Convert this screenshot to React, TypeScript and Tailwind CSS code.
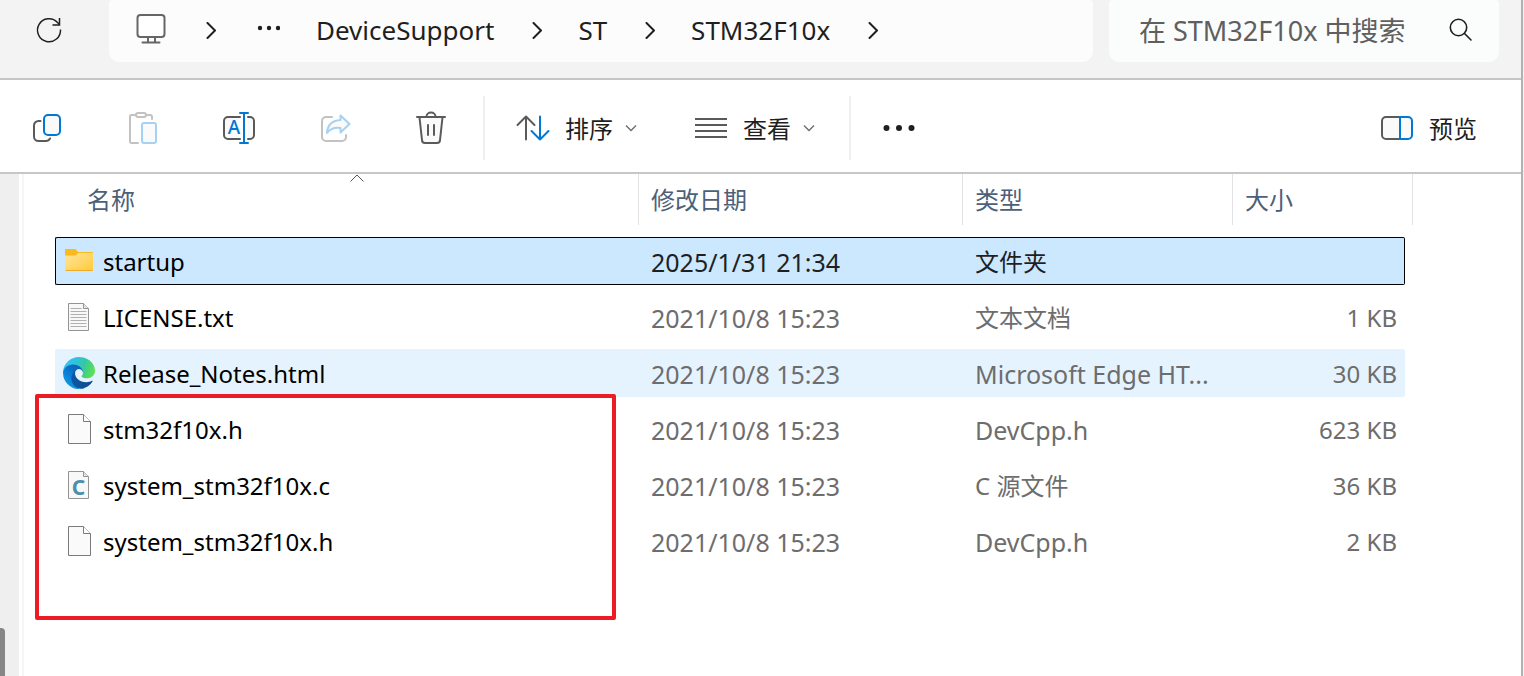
import React from "react";
import clsx from "clsx";

type FileKind = "folder" | "text" | "edge" | "blank" | "csource";

interface FileRow {
  name: string;
  date: string;
  type: string;
  size: string;
  kind: FileKind;
  state?: "selected" | "hover";
}

const files: FileRow[] = [
  { name: "startup", date: "2025/1/31 21:34", type: "文件夹", size: "", kind: "folder", state: "selected" },
  { name: "LICENSE.txt", date: "2021/10/8 15:23", type: "文本文档", size: "1 KB", kind: "text" },
  {
    name: "Release_Notes.html",
    date: "2021/10/8 15:23",
    type: "Microsoft Edge HT...",
    size: "30 KB",
    kind: "edge",
    state: "hover",
  },
  { name: "stm32f10x.h", date: "2021/10/8 15:23", type: "DevCpp.h", size: "623 KB", kind: "blank" },
  { name: "system_stm32f10x.c", date: "2021/10/8 15:23", type: "C 源文件", size: "36 KB", kind: "csource" },
  { name: "system_stm32f10x.h", date: "2021/10/8 15:23", type: "DevCpp.h", size: "2 KB", kind: "blank" },
];

const hasHan = (text: string) => /[\u4e00-\u9fff]/.test(text);

function Icon({ children, className = "size-8" }: { children: React.ReactNode; className?: string }) {
  return (
    <svg
      viewBox="0 0 32 32"
      fill="none"
      stroke="#5a5a5a"
      strokeWidth="2"
      strokeLinecap="round"
      strokeLinejoin="round"
      className={clsx("shrink-0 overflow-visible", className)}
      aria-hidden="true"
    >
      {children}
    </svg>
  );
}

function ChevronRight() {
  return (
    <svg viewBox="0 0 12 18" fill="none" stroke="#1f1f1f" strokeWidth="2" className="h-[18px] w-3 shrink-0" aria-hidden="true">
      <path d="M3.500 1 11 8.500 3.500 16" strokeLinecap="round" strokeLinejoin="round" />
    </svg>
  );
}

function ChevronDown() {
  return (
    <svg viewBox="0 0 12 8" fill="none" stroke="#6b6b6b" strokeWidth="1.3" className="h-2 w-3 shrink-0" aria-hidden="true">
      <path d="M1 1.5 6 6.5 11 1.5" />
    </svg>
  );
}

function EdgeIcon() {
  return (
    <svg viewBox="0 0 256 256" className="size-8 shrink-0" aria-hidden="true">
      <defs>
        <linearGradient id="edge-a" x1="63" y1="178" x2="242" y2="178" gradientUnits="userSpaceOnUse">
          <stop offset="0" stopColor="#0c59a4" />
          <stop offset="1" stopColor="#114a8b" />
        </linearGradient>
        <linearGradient id="edge-b" x1="157" y1="93" x2="46" y2="215" gradientUnits="userSpaceOnUse">
          <stop offset="0" stopColor="#0c62b4" />
          <stop offset=".35" stopColor="#0a6cc4" />
          <stop offset=".67" stopColor="#0680d7" />
          <stop offset="1" stopColor="#1490df" />
        </linearGradient>
        <linearGradient id="edge-c" x1="30" y1="50" x2="250" y2="130" gradientUnits="userSpaceOnUse">
          <stop offset="0" stopColor="#35c1f1" />
          <stop offset=".3" stopColor="#2fc2df" />
          <stop offset=".6" stopColor="#36c7a0" />
          <stop offset="1" stopColor="#5ee250" />
        </linearGradient>
      </defs>
      <g transform="translate(-4.63 -4.92)">
        <path
          fill="url(#edge-a)"
          d="M235.68 195.46a93.73 93.73 0 0 1-10.54 4.71 101.87 101.87 0 0 1-35.9 6.46c-47.32 0-88.54-32.55-88.54-74.32A31.48 31.48 0 0 1 117.13 105c-42.8 1.8-53.8 46.4-53.8 72.53 0 73.88 68.09 81.37 82.76 81.37 7.91 0 19.84-2.3 27-4.56l1.31-.44a128.34 128.34 0 0 0 66.6-52.8 4 4 0 0 0-5.32-5.64Z"
        />
        <path
          fill="url(#edge-b)"
          d="M110.34 246.34A79.2 79.2 0 0 1 87.6 225a80.72 80.72 0 0 1 29.53-120c3.12-1.47 8.45-4.13 15.54-4a32.35 32.35 0 0 1 25.69 13 31.88 31.88 0 0 1 6.36 18.66c0-.21 24.46-79.6-80-79.6-43.9 0-80 41.66-80 78.21a130.15 130.15 0 0 0 12.11 56 128 128 0 0 0 156.38 67.11 75.55 75.55 0 0 1-62.78-8Z"
        />
        <path
          fill="url(#edge-c)"
          d="M156.94 153.78c-.81 1.05-3.3 2.5-3.3 5.66 0 2.61 1.7 5.12 4.72 7.23 14.38 10 41.49 8.68 41.56 8.68a59.56 59.56 0 0 0 30.27-8.35 61.38 61.38 0 0 0 30.43-52.88c.26-22.41-8-37.31-11.34-43.91C228.09 28.76 182.35 4.92 132.61 4.92a128 128 0 0 0-128 126.2c.48-36.54 36.8-66.05 80-66.05 3.5 0 23.46.34 42 10.07 16.34 8.58 24.9 18.94 30.85 29.21 6.18 10.67 7.28 24.15 7.28 29.52s-2.74 13.33-7.8 19.91Z"
        />
      </g>
    </svg>
  );
}

function FileIcon({ kind }: { kind: FileKind }) {
  if (kind === "edge") return <EdgeIcon />;

  if (kind === "folder") {
    return (
      <svg viewBox="0 0 32 32" className="size-8 shrink-0" aria-hidden="true">
        <defs>
          <linearGradient id="folder" x1="0" y1="0" x2="1" y2="1">
            <stop offset="0" stopColor="#ffe69c" />
            <stop offset="1" stopColor="#ffca3a" />
          </linearGradient>
        </defs>
        <path d="M2 5a1 1 0 0 1 1-1h8.500a2 2 0 0 1 1.500.600L15 7h14a1 1 0 0 1 1 1v4H2z" fill="#fbb91c" />
        <path d="M2 10.500h9.500a2 2 0 0 0 1.500-.600L15 8h15v17a1 1 0 0 1-1 1H3a1 1 0 0 1-1-1z" fill="url(#folder)" />
        <path d="M2.500 25.500h27" stroke="#eeac22" />
      </svg>
    );
  }

  if (kind === "blank") {
    return (
      <svg viewBox="0 0 32 32" fill="none" stroke="#7a7a7a" className="size-8 shrink-0" aria-hidden="true">
        <path d="M5.500 1.500h15l7 7v22h-22z" fill="#fafafa" />
        <path d="M20.500 1.500v7h7" fill="#fff" />
      </svg>
    );
  }

  return (
    <svg viewBox="0 0 32 32" fill="none" stroke="#949494" className="size-8 shrink-0" aria-hidden="true">
      <path d="M5.500 2.500h15l5 5v22h-20z" fill="#f8f8f8" />
      <path d="M20.500 2.500v5h5" fill="#e4e4e4" />
      {kind === "text" ? (
        <path d="M7.500 7.500h11M7.500 10.500h16M7.500 13.500h16M7.500 16.500h16M7.500 19.500h16M7.500 22.500h16M7.500 25.500h16" stroke="#b0b0b0" />
      ) : (
        <text x="15.500" y="26" textAnchor="middle" fontSize="21" fontWeight="700" fill="#4a8fae" stroke="none" className="font-['Noto_Sans',sans-serif]">
          C
        </text>
      )}
    </svg>
  );
}

function AddressBar() {
  const crumb = "whitespace-nowrap pb-0.5";

  return (
    <header className="flex h-20 shrink-0 items-start border-b-2 border-[#c6c6c6] bg-[#f3f3f3] pr-[22px]">
      <button type="button" aria-label="刷新" className="flex h-[62px] w-[109px] shrink-0 items-center pl-[33px]">
        <svg viewBox="0 0 32 32" fill="none" stroke="#1f1f1f" strokeWidth="1.500" className="size-8" aria-hidden="true">
          <path d="M27.500 14.500A11.500 11.500 0 1 1 24.500 7.500L26.500 9.500" />
          <path d="M26.500 3v7h-7" />
        </svg>
      </button>

      <nav
        aria-label="地址"
        className="flex h-[62px] min-w-0 flex-1 items-center gap-9 rounded-t-sm rounded-b-[10px] bg-[#fcfcfc] pl-[27px] text-[26px] text-[#1f1f1f]"
      >
        <button type="button" aria-label="此电脑">
          <Icon className="size-8">
            <rect x="1.500" y="0" width="27" height="22" rx="3" fill="#fff" stroke="#666" />
            <path d="M12 23v4M19 23v4M6.500 27.500h17" stroke="#666" />
          </Icon>
        </button>
        <ChevronRight />
        <button type="button" aria-label="更多">
          <svg viewBox="0 0 28 32" fill="#1f1f1f" className="h-8 w-7" aria-hidden="true">
            <circle cx="8" cy="13" r="2.200" />
            <circle cx="17" cy="13" r="2.200" />
            <circle cx="26" cy="13" r="2.200" />
          </svg>
        </button>
        <button type="button" className={crumb}>
          DeviceSupport
        </button>
        <ChevronRight />
        <button type="button" className={crumb}>
          ST
        </button>
        <ChevronRight />
        <button type="button" className={crumb}>
          STM32F10x
        </button>
        <ChevronRight />
      </nav>

      <label className="ml-4 flex h-[62px] w-[390px] shrink-0 items-center justify-between rounded-t-sm rounded-b-[10px] bg-[#fbfcfc] pr-6 pl-[30px]">
        <input
          type="text"
          aria-label="搜索"
          placeholder="在 STM32F10x 中搜索"
          className="w-[290px] bg-transparent text-[27px] text-[#1f1f1f] outline-none placeholder:text-[#5f5f5f]"
        />
        <svg viewBox="0 0 28 28" fill="none" stroke="#1f1f1f" strokeWidth="1.600" strokeLinecap="round" className="size-7" aria-hidden="true">
          <circle cx="11.500" cy="10.500" r="8.200" />
          <path d="M17.500 16.500l6.500 6.500" />
        </svg>
      </label>
    </header>
  );
}

function Toolbar() {
  const square = "flex h-full w-24 shrink-0 items-center justify-center";

  return (
    <div role="toolbar" className="flex h-[94px] shrink-0 items-center border-b-2 border-[#c8c7c5] bg-white pt-1 pr-11 text-2xl text-[#1f1f1f]">
      <button type="button" aria-label="复制" className={square}>
        <Icon>
          <path d="M8.500 9H6.500a4.500 4.500 0 0 0-4.500 4.500v11a4.500 4.500 0 0 0 4.500 4.500h7.500a4.500 4.500 0 0 0 4-2.500" />
          <rect x="12" y="3" width="16" height="20" rx="4" fill="#fafafa" stroke="#0078d4" />
        </Icon>
      </button>
      <button type="button" aria-label="粘贴" disabled className={square}>
        <Icon>
          <path d="M7.500 3H3.500A1.500 1.500 0 0 0 2 4.500v25A1.500 1.500 0 0 0 3.500 31H10M18 3h4a2 2 0 0 1 2 2v2" stroke="#c2c2c2" />
          <rect x="8" y="1" width="10" height="4" rx="2" stroke="#c2c2c2" />
          <rect x="14" y="11" width="14" height="20" rx="2" fill="#fafafa" stroke="#a6d1f2" />
        </Icon>
      </button>
      <button type="button" aria-label="重命名" className={square}>
        <Icon>
          <path d="M16 5H4a4 4 0 0 0-4 4v14a4 4 0 0 0 4 4h12M24 5h2a4 4 0 0 1 4 4v14a4 4 0 0 1-4 4h-2" fill="#fafafa" />
          <path d="M20 1v30M16 1h8M16 31h8" stroke="#0078d4" />
          <text x="10" y="22" textAnchor="middle" fontSize="19" fontWeight="500" fill="#0078d4" stroke="none" className="font-['Noto_Sans',sans-serif]">
            A
          </text>
        </Icon>
      </button>
      <button type="button" aria-label="共享" disabled className={square}>
        <Icon>
          <path d="M12 5H6a4 4 0 0 0-4 4v16a4 4 0 0 0 4 4h16a4 4 0 0 0 4-4v-2" stroke="#c2c2c2" />
          <path d="M20.500 3.500 29.500 12l-9 8.500V16C14 15 10 17 7 21c.500-8 5-12.500 13.500-13z" fill="#fafafa" stroke="#a6d1f2" />
        </Icon>
      </button>
      <button type="button" aria-label="删除" className={square}>
        <Icon>
          <path d="M3.500 5.500 6 28a3 3 0 0 0 3 3h12a3 3 0 0 0 3-3l2.500-22.500" fill="#fafafa" />
          <path d="M1 5h28M10.500 4.500a4.500 4 0 0 1 9 0M12 13v10M18 13v10" />
        </Icon>
      </button>

      <div className="ml-[3px] h-16 w-0.5 bg-[#efefef]" />

      <button type="button" className="ml-8 flex items-center gap-3">
        <Icon>
          <path d="M9 27.500V4.500M.500 13 9 4.500l8.500 8.500" />
          <path d="M23 4.500v23M14.500 19l8.500 8.500 8.500-8.500" stroke="#0078d4" />
        </Icon>
        <span className="pt-0.5 pl-1">排序</span>
        <ChevronDown />
      </button>
      <button type="button" className="ml-[58px] flex items-center gap-3">
        <Icon>
          <path d="M0 7h32M0 13h32M0 19h32M0 25h32" strokeLinecap="butt" />
        </Icon>
        <span className="pt-0.5 pl-1">查看</span>
        <ChevronDown />
      </button>

      <div className="ml-[34px] h-16 w-0.5 bg-[#efefef]" />

      <button type="button" aria-label="查看更多" className="ml-8">
        <svg viewBox="0 0 32 32" fill="#1f1f1f" className="size-8" aria-hidden="true">
          <circle cx="3.500" cy="16" r="3" />
          <circle cx="16" cy="16" r="3" />
          <circle cx="28.500" cy="16" r="3" />
        </svg>
      </button>

      <button type="button" className="ml-auto flex items-center gap-4">
        <Icon>
          <path d="M19 5H5a4 4 0 0 0-4 4v14a4 4 0 0 0 4 4h14" fill="#fafafa" />
          <path d="M19 5h8a4 4 0 0 1 4 4v14a4 4 0 0 1-4 4h-8z" fill="#fafafa" stroke="#0078d4" />
        </Icon>
        <span className="pt-0.5">预览</span>
      </button>
    </div>
  );
}

function FileTable() {
  const head = "h-[51px] border-r border-[#e3e3e3] pl-3 text-left leading-[52px]";

  return (
    <table className="w-[1358px] table-fixed border-collapse">
      <colgroup>
        <col className="w-[584px]" />
        <col className="w-[324px]" />
        <col className="w-[270px]" />
        <col className="w-[180px]" />
      </colgroup>
      <thead className="text-2xl text-[#4c607a]">
        <tr>
          <th className="p-0 pb-3 font-normal" aria-sort="ascending">
            <div className={clsx(head, "relative ml-5")}>
              名称
              <svg viewBox="0 0 14 8" fill="none" stroke="#555" className="absolute top-0 left-1/2 h-2 w-3.5 -translate-x-1/2" aria-hidden="true">
                <path d="M.500 7.500 7 1l6.500 6.500" />
              </svg>
            </div>
          </th>
          {["修改日期", "类型", "大小"].map((label) => (
            <th key={label} className="p-0 pb-3 font-normal">
              <div className={head}>{label}</div>
            </th>
          ))}
        </tr>
      </thead>
      <tbody className="whitespace-nowrap">
        {files.map((file) => {
          const selected = file.state === "selected";
          const cell = clsx(
            "flex h-12 items-center",
            selected && "border-y border-black bg-[#cce8ff] text-[#1f1f1f]",
            file.state === "hover" && "bg-[#e5f3ff]",
            !selected && "text-[#6d6d6d]"
          );

          return (
            <tr key={file.name}>
              <td className="p-0 pb-2">
                <div className={clsx(cell, selected ? "border-l pl-[7px]" : "pl-2", "gap-2 rounded-l-xs")}>
                  <FileIcon kind={file.kind} />
                  <span className="pt-0.5 text-2xl text-black">{file.name}</span>
                </div>
              </td>
              <td className="p-0 pb-2">
                <div className={clsx(cell, "pt-0.5 pl-3 text-[25px] leading-8")}>{file.date}</div>
              </td>
              <td className="p-0 pb-2">
                <div className={clsx(cell, "pt-0.5 pl-3", hasHan(file.type) ? "text-2xl" : "text-[25px] leading-8")}>{file.type}</div>
              </td>
              <td className="p-0 pr-2 pb-2">
                <div className={clsx(cell, "justify-end rounded-r-xs pt-0.5 pr-2 text-2xl", selected && "border-r")}>{file.size}</div>
              </td>
            </tr>
          );
        })}
      </tbody>
    </table>
  );
}

export default function App() {
  return (
    <div className="flex min-h-screen border-r border-[#f3f3f3] bg-white font-['Noto_Sans','Noto_Sans_CJK_SC',sans-serif]">
      <div className="flex min-w-0 flex-1 flex-col border-r-2 border-[#b2b2b2]">
        <AddressBar />
        <Toolbar />
        <div className="flex flex-1">
          <aside className="flex w-[19px] shrink-0 items-end bg-[#efefef]">
            <div className="h-12 w-[5px] rounded-tr-sm bg-[#868686]" />
          </aside>
          <div className="ml-[3px] w-0.5 bg-[#f5f5f5]" />
          <main className="relative min-w-0 flex-1 pl-[31px]">
            <FileTable />
            {/* highlight around the header and source files */}
            <div className="pointer-events-none absolute top-[220px] left-[11px] h-[226px] w-[581px] rounded-xs border-4 border-[#ed1c24]" />
          </main>
        </div>
      </div>
    </div>
  );
}
